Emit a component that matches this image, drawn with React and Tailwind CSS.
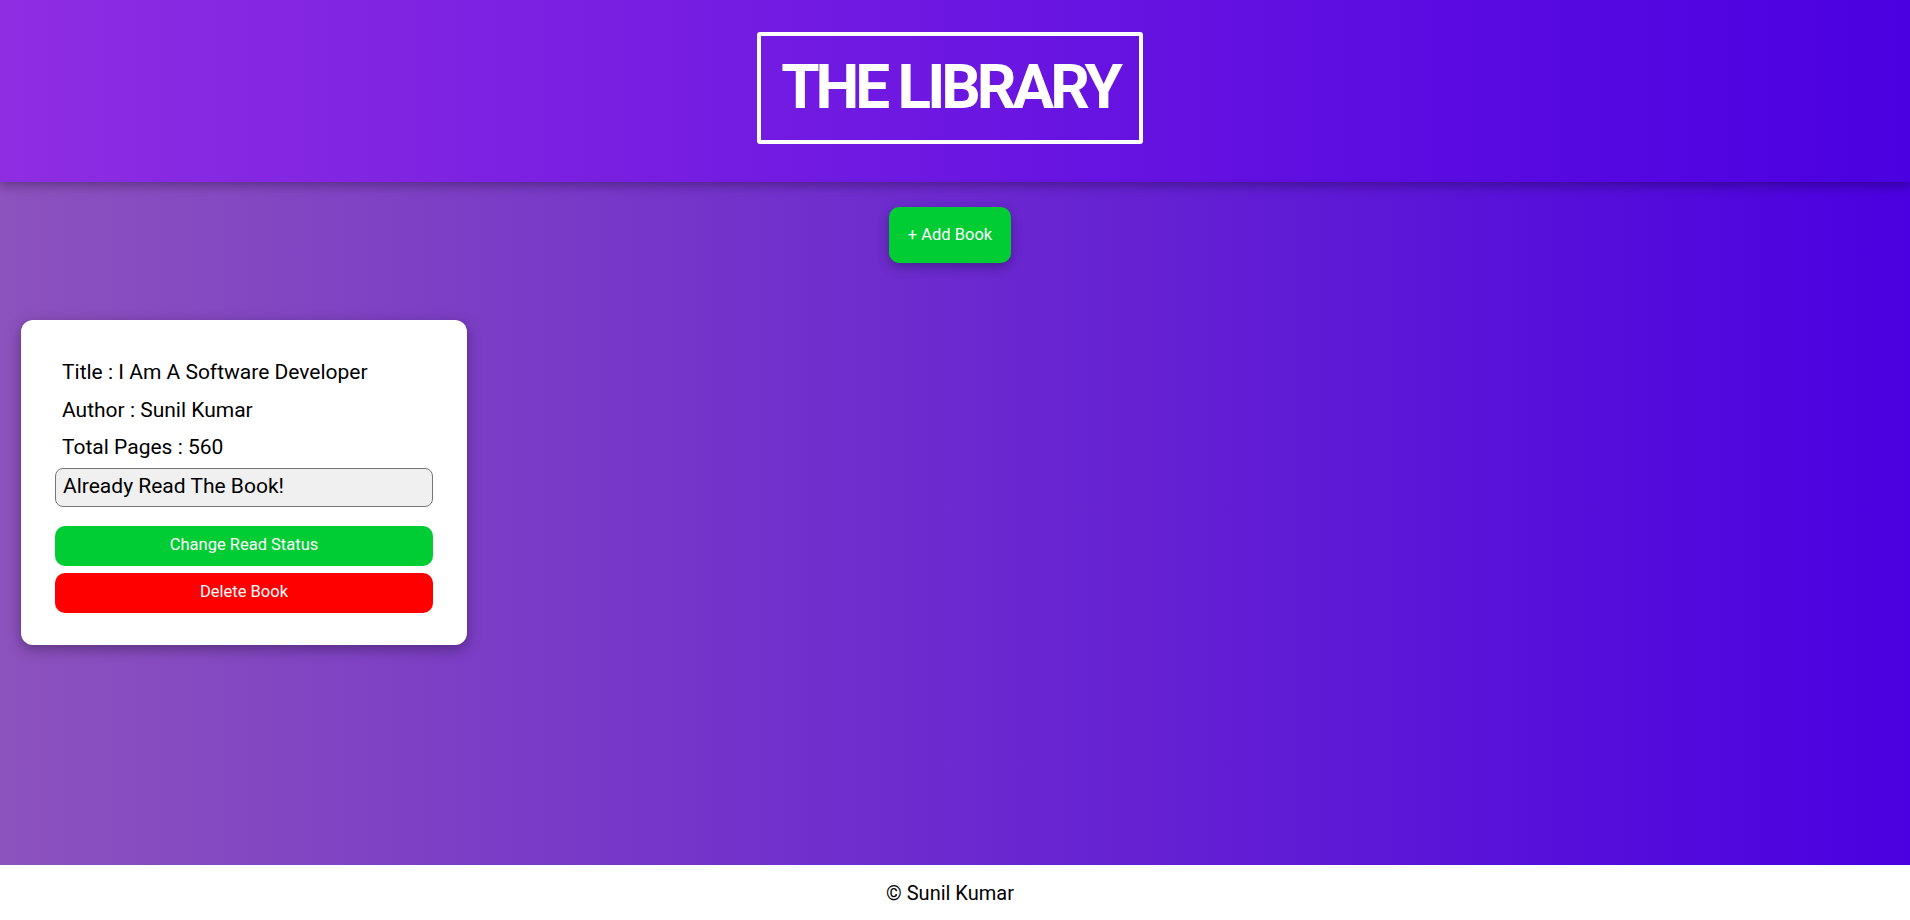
import React from 'react';

const books = [
  { title: 'I Am A Software Developer', author: 'Sunil Kumar', pages: 560, read: true },
];

function BookCard({ book }) {
  return (
    <div className="w-[446px] bg-white rounded-[12px] px-[34px] pt-[34px] pb-[32px] shadow-[0_4px_14px_rgba(0,0,0,0.35)]">
      <p className="px-[7px] text-[21px] leading-[37.5px] text-black">Title : {book.title}</p>
      <p className="px-[7px] text-[21px] leading-[37.5px] text-black">Author : {book.author}</p>
      <p className="px-[7px] text-[21px] leading-[37.5px] text-black">Total Pages : {book.pages}</p>
      <div className="mt-[1px] h-[39px] flex items-center px-[7px] bg-[#f0f0f0] border border-[#767676] rounded-[8px] text-[21px] text-black">
        {book.read ? 'Already Read The Book!' : 'Not Read Yet!'}
      </div>
      <button className="mt-[19px] w-full h-[40px] bg-[#00cc33] text-white text-[16.5px] rounded-[10px]">
        Change Read Status
      </button>
      <button className="mt-[7px] w-full h-[40px] bg-[#ff0000] text-white text-[16.5px] rounded-[10px]">
        Delete Book
      </button>
    </div>
  );
}

export default function App() {
  return (
    <div className="min-h-screen flex flex-col font-['Roboto',sans-serif]">
      <header className="relative z-10 h-[182px] flex justify-center pt-[32px] pr-[10px] bg-[linear-gradient(to_right,#8e2de2,#4a00e0)] shadow-[0_4px_10px_rgba(0,0,0,0.3)]">
        <h1 className="h-[112px] w-[386px] flex items-center justify-center pb-[4px] whitespace-nowrap border-4 border-white rounded-[3px] text-white text-[62px] font-bold tracking-[-4px]">
          THE LIBRARY
        </h1>
      </header>

      <main className="flex-1 bg-[linear-gradient(to_right,#8c52bd,#4a00e0)]">
        <div className="flex justify-center pt-[25px] pr-[10px]">
          <button className="w-[122px] h-[56px] bg-[#00cc33] text-white text-[16.5px] rounded-[10px] shadow-[0_4px_12px_rgba(0,0,0,0.3)]">
            + Add Book
          </button>
        </div>
        <div className="flex flex-wrap gap-6 px-[21px] pt-[57px] pb-[40px]">
          {books.map((b, i) => (
            <BookCard key={i} book={b} />
          ))}
        </div>
      </main>

      <footer className="h-[55px] flex items-center justify-center pr-[10px] bg-white text-[20px] text-black">
        © Sunil Kumar
      </footer>
    </div>
  );
}
